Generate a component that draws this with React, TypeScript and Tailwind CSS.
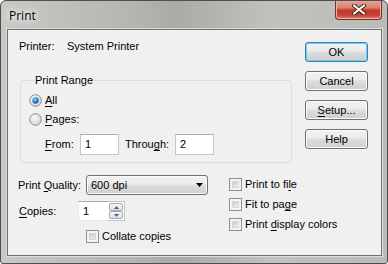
import React from 'react';

function Mn({ t, u }: { t: string; u: number }) {
  return (
    <>
      {t.slice(0, u)}
      <span className="underline underline-offset-[2px]">{t[u]}</span>
      {t.slice(u + 1)}
    </>
  );
}

function Radio({ checked }: { checked?: boolean }) {
  return (
    <svg width="13" height="13" viewBox="0 0 13 13" className="shrink-0">
      <defs>
        <radialGradient id="rbg" cx="0.4" cy="0.35" r="0.7">
          <stop offset="0" stopColor="#f9f9f9" />
          <stop offset="1" stopColor="#d3d3d3" />
        </radialGradient>
        <radialGradient id="rdot" cx="0.4" cy="0.35" r="0.7">
          <stop offset="0" stopColor="#8fd0ff" />
          <stop offset="0.6" stopColor="#2a7fd0" />
          <stop offset="1" stopColor="#0d4f94" />
        </radialGradient>
      </defs>
      <circle cx="6.5" cy="6.5" r="5.8" fill="url(#rbg)" stroke="#8c8e8e" strokeWidth="1" />
      {checked && <circle cx="6.5" cy="6.5" r="3.2" fill="url(#rdot)" />}
    </svg>
  );
}

function Check() {
  return (
    <div className="w-[13px] h-[13px] shrink-0 border border-[#8e8f8f] bg-[#f4f4f4] p-[2px]">
      <div className="w-full h-full bg-[linear-gradient(135deg,#c9cbcd,#eeeeee)] border border-[#d6d7d8]" />
    </div>
  );
}

function Btn({ children, primary }: { children: React.ReactNode; primary?: boolean }) {
  return (
    <div
      className={`w-[63px] h-[20px] rounded-[3px] border flex items-center justify-center bg-[linear-gradient(#f2f2f2_0%,#ebebeb_45%,#dddddd_50%,#cfcfcf_100%)] ${
        primary ? 'border-[#3c7fb1] shadow-[inset_0_0_0_1px_#6fcdf4]' : 'border-[#707070] shadow-[inset_0_0_0_1px_#fcfcfc]'
      }`}
    >
      {children}
    </div>
  );
}

function Edit({ value, w }: { value: string; w: string }) {
  return (
    <div className={`${w} h-[21px] bg-white border border-[#c3c6ca] border-t-[#abadb3] flex items-center pl-[4px]`}>
      {value}
    </div>
  );
}

export default function App() {
  return (
    <div className="w-[388px] h-[264px] overflow-hidden rounded-t-[6px] rounded-b-[3px] border border-[#4e4f50] bg-[linear-gradient(90deg,#c8c9c4,#b4b5b0_35%,#a9aaa6_45%,#c1c2bd_70%,#bbbcb7)] flex flex-col font-['Liberation_Sans',Arial,sans-serif] text-[11px] leading-[13px] text-black whitespace-nowrap">
      <div className="h-[28px] flex items-start justify-between pl-[8px] pr-[5px]">
        <span className="mt-[8px] text-[12px] font-['Open_Sans',sans-serif] [text-shadow:0_0_6px_#fff,0_0_10px_#fff,0_0_12px_#fff]">Print</span>
        <div className="-mt-[1px] w-[47px] h-[20px] rounded-b-[4px] border border-t-0 border-[#7a2f27] bg-[linear-gradient(#e8a898_0%,#d8826f_40%,#c2392c_55%,#c54336_80%,#df8472_100%)] flex items-center justify-center shadow-[inset_0_0_0_1px_#eab3a6]">
          <svg width="14" height="11" viewBox="0 0 14 11">
            <path d="M2 1.5 L12 9.5 M12 1.5 L2 9.5" stroke="#4a1d18" strokeWidth="4" strokeLinecap="round" />
            <path d="M2 1.5 L12 9.5 M12 1.5 L2 9.5" stroke="#ffffff" strokeWidth="2.2" strokeLinecap="round" />
          </svg>
        </div>
      </div>
      <div className="ml-[6px] mr-[5px] mb-[7px] flex-1 border border-[#6e7073] bg-[#f0f0f0] shadow-[0_0_0_1px_#dcdddd] flex">
        <div className="w-[285px] shrink-0 flex flex-col">
          <div className="pt-[10px] pl-[11px] flex">
            <span className="w-[48px]">Printer:</span>
            <span>System Printer</span>
          </div>
          <fieldset className="ml-[12px] w-[272px] mt-[21px] border border-[#d5dfe5] rounded-[3px] pl-[8px] pb-[7px]">
            <legend className="ml-[5px] px-[1px]">Print Range</legend>
            <div className="mt-[7px] flex items-center h-[13px]">
              <Radio checked />
              <span className="ml-[3px]"><Mn t="All" u={0} /></span>
            </div>
            <div className="mt-[6px] flex items-center h-[13px]">
              <Radio />
              <span className="ml-[3px]"><Mn t="Pages:" u={0} /></span>
            </div>
            <div className="mt-[8px] ml-[16px] flex items-center">
              <span className="w-[35px]"><Mn t="From:" u={0} /></span>
              <Edit value="1" w="w-[39px]" />
              <span className="ml-[6px] w-[50px]"><Mn t="Through:" u={5} /></span>
              <Edit value="2" w="w-[39px]" />
            </div>
          </fieldset>
          <div className="mt-[12px] flex">
            <div className="w-[200px] shrink-0 pl-[10px] flex flex-col">
              <div className="h-[20px] flex items-center">
                <span className="w-[68px]">Print <Mn t="Quality:" u={0} /></span>
                <div className="w-[122px] h-[20px] rounded-[3px] border border-[#707070] bg-[linear-gradient(#f2f2f2_0%,#ebebeb_45%,#dddddd_50%,#cfcfcf_100%)] shadow-[inset_0_0_0_1px_#fbfbfb] flex items-center justify-between pl-[4px] pr-[4px]">
                  <span>600 dpi</span>
                  <svg width="7" height="4" viewBox="0 0 7 4">
                    <path d="M0 0 H7 L3.5 4 Z" fill="#000" />
                  </svg>
                </div>
              </div>
              <div className="mt-[6px] h-[20px] flex items-center pl-[1px]">
                <span className="w-[59px]"><Mn t="Copies:" u={0} /></span>
                <div className="w-[30px] h-[20px] bg-white border border-[#e3e9ef] border-t-[#abadb3] border-r-0 flex items-center pl-[4px]">1</div>
                <div className="w-[17px] h-[20px] bg-white border border-[#c3c6ca] border-l-0 flex flex-col p-[1px]">
                  <div className="flex-1 border border-[#a7abb0] rounded-[2px] bg-[linear-gradient(#f3f5f7,#dde3ea)] flex items-center justify-center">
                    <svg width="5" height="3" viewBox="0 0 5 3"><path d="M0 3 L2.5 0 L5 3 Z" fill="#4d6185" /></svg>
                  </div>
                  <div className="flex-1 border border-[#a7abb0] rounded-[2px] bg-[linear-gradient(#f3f5f7,#dde3ea)] flex items-center justify-center">
                    <svg width="5" height="3" viewBox="0 0 5 3"><path d="M0 0 L5 0 L2.5 3 Z" fill="#4d6185" /></svg>
                  </div>
                </div>
              </div>
              <div className="mt-[9px] ml-[68px] h-[13px] flex items-center">
                <Check />
                <span className="ml-[3px]">Collate cop<Mn t="ies" u={0} /></span>
              </div>
            </div>
            <div className="ml-[21px] shrink-0 pt-[3px] flex flex-col gap-[7px]">
              <div className="h-[13px] flex items-center">
                <Check />
                <span className="ml-[3px]">Print to fi<Mn t="le" u={0} /></span>
              </div>
              <div className="h-[13px] flex items-center">
                <Check />
                <span className="ml-[3px]">Fit to pa<Mn t="ge" u={0} /></span>
              </div>
              <div className="h-[13px] flex items-center">
                <Check />
                <span className="ml-[3px]">Print <Mn t="display" u={0} /> colors</span>
              </div>
            </div>
          </div>
        </div>
        <div className="pl-[12px] pt-[12px] flex flex-col gap-[9px]">
          <Btn primary>OK</Btn>
          <Btn>Cancel</Btn>
          <Btn><Mn t="Setup..." u={0} /></Btn>
          <Btn>Help</Btn>
        </div>
      </div>
    </div>
  );
}
